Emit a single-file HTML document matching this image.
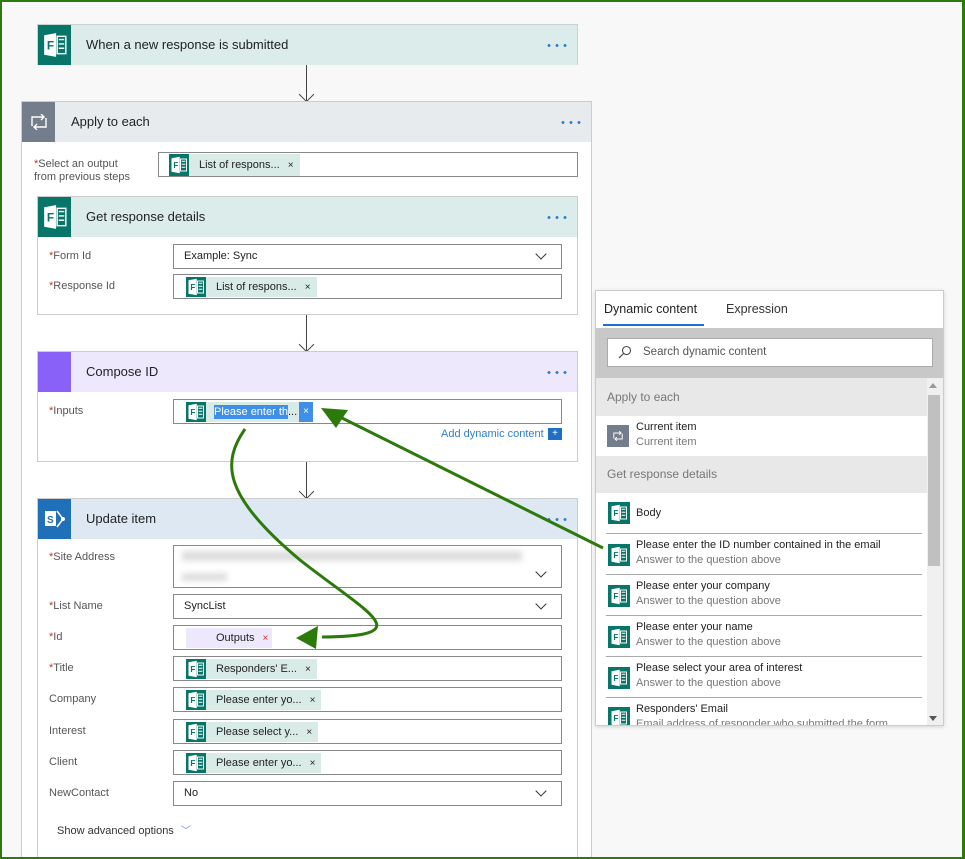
<!DOCTYPE html>
<html><head><meta charset="utf-8"><style>
*{box-sizing:border-box;margin:0;padding:0}
html,body{width:965px;height:859px;overflow:hidden}
body{background:#f8f8f8;font-family:"Segoe UI","Liberation Sans",sans-serif;font-size:12px;color:#222;position:relative}
.frame{position:absolute;left:0;top:0;width:965px;height:859px;border:2px solid #2b7a0b;border-right-width:3px;z-index:50;pointer-events:none}
.abs{position:absolute}
.card{position:absolute;background:#fff;border:1px solid #ccc}
.hdr{position:absolute;left:0;right:0;top:0;height:40px}
.hdr .ic{position:absolute;left:0;top:0;width:33px;height:40px;display:flex;align-items:center;justify-content:center}
.hdr .t{position:absolute;left:48px;top:12px;font-size:13px;color:#222}
.dots{position:absolute;right:10px;top:19px;width:22px;height:3px;background:radial-gradient(circle,#2f7fd0 1.3px,transparent 1.6px) 0 0/8px 3px repeat-x}
.lbl{position:absolute;font-size:11px;color:#555}
.lbl b{color:#c33;font-weight:normal}
.box{position:absolute;background:#fff;border:1px solid #888;height:25px}
.chip{position:absolute;top:2px;left:12px;height:20px;background:#d9ebe7;display:flex;align-items:center;font-size:11px;color:#222}
.chip .ci{width:20px;height:20px;background:#077568;display:flex;align-items:center;justify-content:center}
.chip span{padding:0 8px 0 10px}
.chip i{font-style:normal;font-size:10px;padding-right:6px}
.val{position:absolute;left:10px;top:5px;font-size:11px}
.chev{position:absolute;right:16px;top:5px;width:8px;height:8px;border-right:1.2px solid #333;border-bottom:1.2px solid #333;transform:rotate(45deg)}
.arrow{position:absolute;width:1px;background:#444}
.arrow:after{content:"";position:absolute;left:-5px;bottom:1px;width:10px;height:10px;border-right:1.5px solid #444;border-bottom:1.5px solid #444;transform:rotate(45deg)}
.row{position:absolute;left:0;right:16px;background:#fff}
.row .it{position:absolute;left:12px;width:22px;height:22px;background:#077568;display:flex;align-items:center;justify-content:center}
.row .a{position:absolute;left:40px;font-size:11px;color:#222}
.row .b{position:absolute;left:40px;font-size:11px;color:#777}
.row .ln{position:absolute;left:10px;right:2px;bottom:0;height:1px;background:#aaa}
</style></head><body>
<div class="frame"></div>
<svg width="0" height="0" style="position:absolute"><defs>
<symbol id="f" viewBox="0 0 24 24"><path d="M2 3l11-2v22L2 21z" fill="#fff"/><text x="4.5" y="16" font-family="Liberation Sans" font-weight="bold" font-size="11" fill="#077568">F</text><rect x="14" y="4" width="8" height="16" fill="none" stroke="#fff" stroke-width="1.3"/><path d="M15.5 7h5M15.5 11h5M15.5 15h5" stroke="#fff" stroke-width="1.3"/></symbol>
</defs></svg>

<div class="card" style="left:37px;top:24px;width:541px;height:41px;border-color:#c8d4d2">
 <div class="hdr" style="background:#dbecea"><div class="ic" style="background:#077568"><svg width="26" height="26"><use href="#f"/></svg></div><div class="t">When a new response is submitted</div><div class="dots"></div></div>
</div>
<div class="arrow" style="left:306px;top:65px;height:36px"></div>

<div class="card" style="left:21px;top:101px;width:571px;height:770px;border-color:#ccc">
 <div class="hdr" style="background:#e8ebee"><div class="ic" style="background:#737d8c;width:33px"><svg width="20" height="16" viewBox="0 0 20 16"><path d="M3 12V3h12M12 0l3 3-3 3M17 4v9H5M8 16l-3-3 3-3" fill="none" stroke="#fff" stroke-width="1.4"/></svg></div><div class="t" style="left:49px">Apply to each</div><div class="dots"></div></div>
</div>
<div class="lbl" style="left:34px;top:158px;line-height:13px"><b>*</b>Select an output<br>from previous steps</div>
<div class="box" style="left:158px;top:152px;width:420px"><div class="chip" style="left:10px;top:1px;height:22px"><div class="ci" style="height:22px"><svg width="18" height="18"><use href="#f"/></svg></div><span>List of respons...</span><i>×</i></div></div>

<div class="card" style="left:37px;top:196px;width:541px;height:119px">
 <div class="hdr" style="background:#dbecea"><div class="ic" style="background:#077568"><svg width="26" height="26"><use href="#f"/></svg></div><div class="t">Get response details</div><div class="dots"></div></div>
</div>
<div class="lbl" style="left:49px;top:250px"><b>*</b>Form Id</div>
<div class="box" style="left:173px;top:244px;width:389px"><div class="val">Example: Sync</div><div class="chev"></div></div>
<div class="lbl" style="left:49px;top:280px"><b>*</b>Response Id</div>
<div class="box" style="left:173px;top:274px;width:389px"><div class="chip"><div class="ci"><svg width="18" height="18"><use href="#f"/></svg></div><span>List of respons...</span><i>×</i></div></div>
<div class="arrow" style="left:306px;top:315px;height:36px"></div>

<div class="card" style="left:37px;top:351px;width:541px;height:111px">
 <div class="hdr" style="background:#ede8fc"><div class="ic" style="background:#8961f8"></div><div class="t">Compose ID</div><div class="dots"></div></div>
</div>
<div class="lbl" style="left:49px;top:405px"><b>*</b>Inputs</div>
<div class="box" style="left:173px;top:399px;width:389px"><div class="chip"><div class="ci"><svg width="18" height="18"><use href="#f"/></svg></div><span style="padding:0 0 0 8px"><span style="background:#3f8ee8;color:#fff;padding:1px 0">Please enter th</span>...</span><i style="background:#3f8ee8;color:#fff;height:20px;line-height:20px;padding:0 4px;margin-left:2px">×</i></div></div>
<div class="abs" style="left:441px;top:428px;font-size:11px;color:#2f7fd0">Add dynamic content</div>
<div class="abs" style="left:548px;top:428px;width:14px;height:12px;background:#1f6fc5;color:#fff;font-size:10px;line-height:12px;text-align:center">+</div>
<div class="arrow" style="left:306px;top:462px;height:36px"></div>

<div class="card" style="left:37px;top:498px;width:541px;height:370px">
 <div class="hdr" style="background:#dde8f3"><div class="ic" style="background:#1f6fb9"><svg width="24" height="24" viewBox="0 0 24 24"><rect x="2" y="4" width="11" height="15" fill="#fff"/><text x="4" y="16" font-family="Liberation Sans" font-weight="bold" font-size="10" fill="#1f6fb9">S</text><path d="M14 4l6 8-6 8" fill="none" stroke="#fff" stroke-width="1.5"/><circle cx="20" cy="12" r="2" fill="#fff"/></svg></div><div class="t">Update item</div><div class="dots"></div></div>
</div>
<div class="lbl" style="left:49px;top:551px"><b>*</b>Site Address</div>
<div class="box" style="left:173px;top:545px;width:389px;height:43px"><div class="abs" style="left:8px;top:5px;width:340px;height:10px;background:#ddd;filter:blur(3px)"></div><div class="abs" style="left:8px;top:27px;width:45px;height:8px;background:#ddd;filter:blur(3px)"></div><div class="chev" style="top:22px"></div></div>
<div class="lbl" style="left:49px;top:600px"><b>*</b>List Name</div>
<div class="box" style="left:173px;top:594px;width:389px"><div class="val">SyncList</div><div class="chev"></div></div>
<div class="lbl" style="left:49px;top:631px"><b>*</b>Id</div>
<div class="box" style="left:173px;top:625px;width:389px"><div class="chip" style="background:#ede8fc;width:86px"><span style="padding-left:30px">Outputs</span><i style="color:#c33">×</i></div></div>
<div class="lbl" style="left:49px;top:662px"><b>*</b>Title</div>
<div class="box" style="left:173px;top:656px;width:389px"><div class="chip"><div class="ci"><svg width="18" height="18"><use href="#f"/></svg></div><span>Responders' E...</span><i>×</i></div></div>
<div class="lbl" style="left:49px;top:693px">Company</div>
<div class="box" style="left:173px;top:687px;width:389px"><div class="chip"><div class="ci"><svg width="18" height="18"><use href="#f"/></svg></div><span>Please enter yo...</span><i>×</i></div></div>
<div class="lbl" style="left:49px;top:725px">Interest</div>
<div class="box" style="left:173px;top:719px;width:389px"><div class="chip"><div class="ci"><svg width="18" height="18"><use href="#f"/></svg></div><span>Please select y...</span><i>×</i></div></div>
<div class="lbl" style="left:49px;top:756px">Client</div>
<div class="box" style="left:173px;top:750px;width:389px"><div class="chip"><div class="ci"><svg width="18" height="18"><use href="#f"/></svg></div><span>Please enter yo...</span><i>×</i></div></div>
<div class="lbl" style="left:49px;top:787px">NewContact</div>
<div class="box" style="left:173px;top:781px;width:389px"><div class="val">No</div><div class="chev"></div></div>
<div class="lbl" style="left:57px;top:822px;color:#333">Show advanced options <span style="color:#6b8fd6;font-size:10px;margin-left:4px">﹀</span></div>

<div class="abs" style="left:595px;top:290px;width:349px;height:436px;background:#fff;border:1px solid #ccc;box-shadow:0 1px 4px rgba(0,0,0,.15);overflow:hidden">
 <div class="abs" style="left:8px;top:11px;font-size:12.5px;color:#222">Dynamic content</div>
 <div class="abs" style="left:7px;top:33px;width:101px;height:2px;background:#1f6fd5"></div>
 <div class="abs" style="left:130px;top:11px;font-size:12.5px;color:#333">Expression</div>
 <div class="abs" style="left:0;top:37px;width:349px;height:50px;background:#c8c8c8"></div>
 <div class="abs" style="left:11px;top:47px;width:326px;height:29px;background:#fff;border:1px solid #aaa"><svg class="abs" style="left:10px;top:6px" width="14" height="14" viewBox="0 0 14 14"><circle cx="8.5" cy="5.5" r="4" fill="none" stroke="#444" stroke-width="1.1"/><path d="M5.5 8.5L1 13" stroke="#444" stroke-width="1.2"/></svg><div class="abs" style="left:35px;top:7px;font-size:11.5px;color:#555">Search dynamic content</div></div>
 <div class="abs" style="left:0;top:87px;width:349px;height:350px;background:#f0f0f0"></div>
 <div class="abs" style="left:0;top:87px;width:331px;height:38px;background:#e8e8e8"><div class="abs" style="left:11px;top:12px;font-size:12px;color:#777">Apply to each</div></div>
 <div class="row" style="top:125px;height:40px"><div class="it" style="left:11px;top:9px;background:#737d8c"><svg width="12" height="10" viewBox="0 0 20 16"><path d="M3 12V3h12M12 0l3 3-3 3M17 4v9H5M8 16l-3-3 3-3" fill="none" stroke="#fff" stroke-width="1.6"/></svg></div><div class="a" style="top:5px">Current item</div><div class="b" style="top:20px">Current item</div></div>
 <div class="abs" style="left:0;top:165px;width:331px;height:37px;background:#e8e8e8"><div class="abs" style="left:11px;top:11px;font-size:12px;color:#777">Get response details</div></div>
 <div class="row" style="top:202px;height:41px"><div class="it" style="top:9px"><svg width="18" height="18"><use href="#f"/></svg></div><div class="a" style="top:14px">Body</div><div class="ln" style="right:5px"></div></div>
 <div class="row" style="top:243px;height:41px"><div class="it" style="top:10px"><svg width="18" height="18"><use href="#f"/></svg></div><div class="a" style="top:5px">Please enter the ID number contained in the email</div><div class="b" style="top:20px">Answer to the question above</div><div class="ln" style="right:5px"></div></div>
 <div class="row" style="top:284px;height:41px"><div class="it" style="top:10px"><svg width="18" height="18"><use href="#f"/></svg></div><div class="a" style="top:5px">Please enter your company</div><div class="b" style="top:20px">Answer to the question above</div><div class="ln" style="right:5px"></div></div>
 <div class="row" style="top:325px;height:41px"><div class="it" style="top:10px"><svg width="18" height="18"><use href="#f"/></svg></div><div class="a" style="top:5px">Please enter your name</div><div class="b" style="top:20px">Answer to the question above</div><div class="ln" style="right:5px"></div></div>
 <div class="row" style="top:366px;height:41px"><div class="it" style="top:10px"><svg width="18" height="18"><use href="#f"/></svg></div><div class="a" style="top:5px">Please select your area of interest</div><div class="b" style="top:20px">Answer to the question above</div><div class="ln" style="right:5px"></div></div>
 <div class="row" style="top:407px;height:41px"><div class="it" style="top:9px"><svg width="18" height="18"><use href="#f"/></svg></div><div class="a" style="top:5px">Responders' Email</div><div class="b" style="top:20px">Email address of responder who submitted the form</div></div>
 <div class="abs" style="left:332px;top:104px;width:12px;height:171px;background:#c0c0c0"></div>
 <div class="abs" style="left:333px;top:92px;width:0;height:0;border:4px solid transparent;border-bottom:5px solid #999;border-top:0"></div>
 <div class="abs" style="left:333px;top:425px;width:0;height:0;border:4px solid transparent;border-top:5px solid #555;border-bottom:0"></div>
</div>

<svg class="abs" style="left:0;top:0;z-index:40" width="965" height="859">
 <path d="M245 429 C222 462,222 495,300 560 C370 615,420 636,322 637" fill="none" stroke="#2b7a0b" stroke-width="3"/>
 <path d="M296 638 L318 626 L316 649 Z" fill="#2b7a0b"/>
 <path d="M603 548 L340 417" fill="none" stroke="#2b7a0b" stroke-width="3"/>
 <path d="M321 408 L348 410 L336 428 Z" fill="#2b7a0b"/>
</svg>
</body></html>
